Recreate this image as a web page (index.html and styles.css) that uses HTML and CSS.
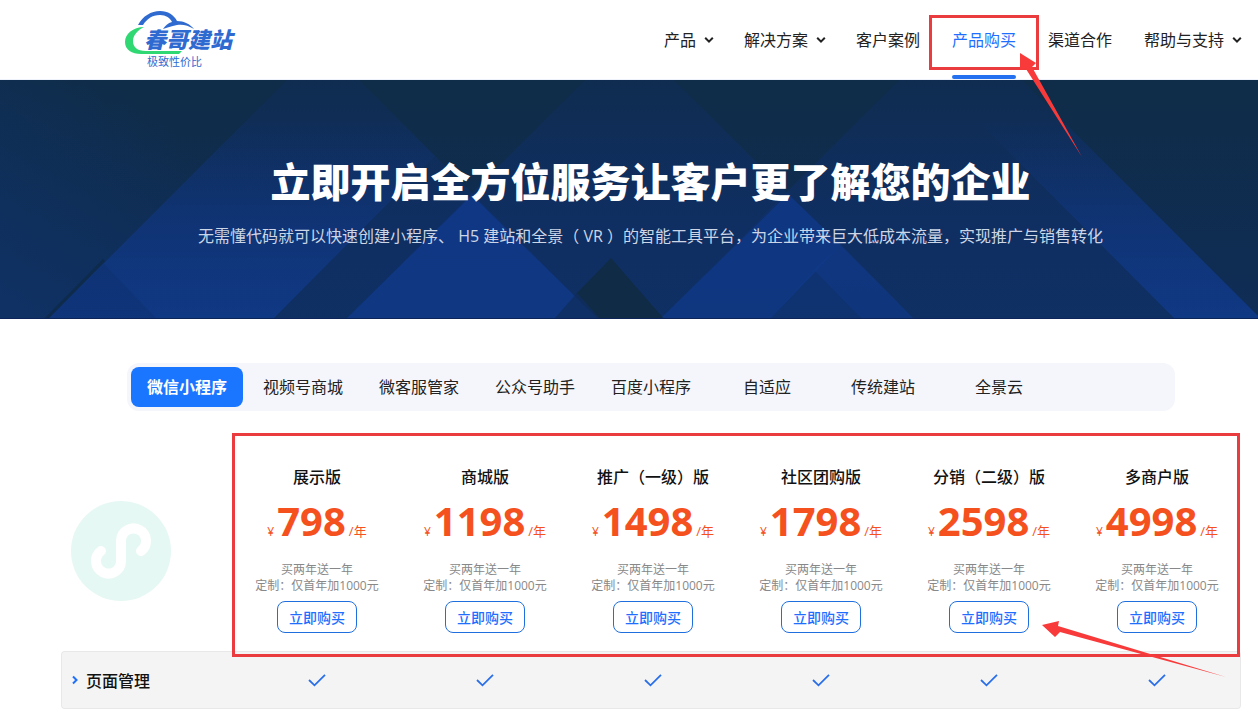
FILE: index.html
```
<!DOCTYPE html>
<html lang="zh-CN">
<head>
<meta charset="utf-8">
<meta name="viewport" content="width=device-width, initial-scale=1">
<title>春哥建站 - 产品购买</title>
<link rel="stylesheet" href="styles.css">
</head>
<body>
<svg class="defs" aria-hidden="true">
  <symbol id="caret" viewBox="0 0 10 8"><path d="M1.2 1.8 5 5.6 8.8 1.8" fill="none" stroke="currentColor" stroke-width="2"/></symbol>
  <symbol id="check" viewBox="0 0 18 14"><path d="M1 7 6.5 12.3 17 1.8" fill="none" stroke="currentColor" stroke-width="1.8"/></symbol>
</svg>

<header class="header">
  <a class="logo" href="#" aria-label="春哥建站">
    <svg class="logo-mark" viewBox="0 0 116 60" aria-hidden="true">
      <path d="M14 17C19 8 27 3 36 3c8 0 14 4 17 10 7 0 13 3 17 8-6-4-12-5-17-4-6 1-10 3-14 4 2-3 5-6 9-7-2-4-6-7-12-7-8 0-13 4-17 10z" fill="#2f6ad0"/>
      <path d="M20 19C9 19 1 26 1 34c0 8 7 12 16 12h38l3-3H22c-9 0-13-4-13-10 0-6 5-11 11-14z" fill="#2fd873"/>
    </svg>
    <span class="logo-name">春哥建站</span>
    <span class="logo-tag">极致性价比</span>
  </a>
  <nav class="nav">
    <a href="#">产品<svg class="caret"><use href="#caret"/></svg></a>
    <a href="#">解决方案<svg class="caret"><use href="#caret"/></svg></a>
    <a href="#">客户案例</a>
    <a class="current" href="#" aria-current="page">产品购买
      <span class="mark mark-nav"></span>
      <svg class="arrow arrow-nav" viewBox="0 0 64 106" aria-hidden="true"><path d="M1 1 17 11 13 15 63 105 7 17 1 18z" fill="#f93a3a"/></svg>
    </a>
    <a href="#">渠道合作</a>
    <a href="#">帮助与支持<svg class="caret"><use href="#caret"/></svg></a>
  </nav>
</header>

<section class="hero">
  <svg class="hero-art" viewBox="0 0 1258 239" preserveAspectRatio="none" aria-hidden="true">
    <defs>
      <linearGradient id="soft" gradientUnits="userSpaceOnUse" x1="0" y1="0" x2="0" y2="239"><stop offset="0" stop-color="#0f3070" stop-opacity=".2"/><stop offset=".5" stop-color="#0f3070" stop-opacity=".5"/><stop offset="1" stop-color="#0f3064" stop-opacity=".9"/></linearGradient>
      <linearGradient id="glow" gradientUnits="userSpaceOnUse" x1="0" y1="40" x2="0" y2="239"><stop offset="0" stop-color="#103a8c" stop-opacity="0"/><stop offset="1" stop-color="#103a8a" stop-opacity=".85"/></linearGradient>
      <linearGradient id="side" x1="0" y1="1" x2="1" y2="0"><stop offset="0" stop-color="#0f3266" stop-opacity=".9"/><stop offset=".7" stop-color="#0f3266" stop-opacity="0"/></linearGradient>
    </defs>
    <path d="M0 0H287L48 239H0z" fill="url(#side)"/>
    <path d="M287 0H359L598 239H48z" fill="url(#soft)"/>
    <path d="M585 0H674L914 239H346z" fill="url(#soft)"/>
    <path d="M899 0H1022L1258 236V239H660z" fill="url(#soft)"/>
    <path d="M287 0H359L435 76 273 239H48z" fill="url(#glow)"/>
    <path d="M104 184 157 239H48z" fill="#0f2f68" opacity=".35"/>
    <path d="M104 180 46 239" stroke="#0e2a48" stroke-width="3" opacity=".8"/>
    <path d="M472 115 598 239H346z" fill="#103a8a" opacity=".8"/>
    <path d="M788 114 841 165 770 239H660z" fill="#103a8a" opacity=".75"/>
    <path d="M841 165 914 239H862L814 190z" fill="#103a8a" opacity=".65"/>
    <path d="M814 190 862 239H770z" fill="#103a8a" opacity=".3"/>
    <path d="M937 0H1022L1258 236V239H1175z" fill="url(#glow)"/>
    <path d="M611 178 664 239H600L577 213z" fill="#0f2b45"/>
    <path d="M577 213 600 239H554z" fill="#0f2b55" opacity=".6"/>
    <path d="M0 238.5H1258" stroke="#0d2458"/>
  </svg>
  <h1>立即开启全方位服务让客户更了解您的企业</h1>
  <p>无需懂代码就可以快速创建小程序、 H5 建站和全景（ VR ）的智能工具平台，为企业带来巨大低成本流量，实现推广与销售转化</p>
</section>

<main class="main">
  <div class="tabs" role="tablist">
    <button class="tab active" role="tab" aria-selected="true">微信小程序</button>
    <button class="tab" role="tab">视频号商城</button>
    <button class="tab" role="tab">微客服管家</button>
    <button class="tab" role="tab">公众号助手</button>
    <button class="tab" role="tab">百度小程序</button>
    <button class="tab" role="tab">自适应</button>
    <button class="tab" role="tab">传统建站</button>
    <button class="tab" role="tab">全景云</button>
  </div>

  <div class="pricing">
    <table class="plans">
      <colgroup><col class="col-label"><col span="6"></colgroup>
      <thead>
        <tr>
          <td class="brand">
            <svg class="mini" viewBox="-50 -50 100 100" aria-hidden="true"><circle r="50" fill="#e6f8f3"/><path d="M20 0A12.500 12.500 0 1 0 0-10V10A12.500 12.500 0 1 1-20 0" fill="none" stroke="#fff" stroke-width="10" stroke-linecap="round"/></svg>
          </td>
          <th scope="col"><div class="name">展示版</div><div class="price"><span>¥</span><strong>798</strong><span class="unit">/年</span></div><div class="note">买两年送一年<br>定制：仅首年加1000元</div><button class="buy">立即购买</button></th>
          <th scope="col"><div class="name">商城版</div><div class="price"><span>¥</span><strong>1198</strong><span class="unit">/年</span></div><div class="note">买两年送一年<br>定制：仅首年加1000元</div><button class="buy">立即购买</button></th>
          <th scope="col"><div class="name">推广（一级）版</div><div class="price"><span>¥</span><strong>1498</strong><span class="unit">/年</span></div><div class="note">买两年送一年<br>定制：仅首年加1000元</div><button class="buy">立即购买</button></th>
          <th scope="col"><div class="name">社区团购版</div><div class="price"><span>¥</span><strong>1798</strong><span class="unit">/年</span></div><div class="note">买两年送一年<br>定制：仅首年加1000元</div><button class="buy">立即购买</button></th>
          <th scope="col"><div class="name">分销（二级）版</div><div class="price"><span>¥</span><strong>2598</strong><span class="unit">/年</span></div><div class="note">买两年送一年<br>定制：仅首年加1000元</div><button class="buy">立即购买</button></th>
          <th scope="col"><div class="name">多商户版</div><div class="price"><span>¥</span><strong>4998</strong><span class="unit">/年</span></div><div class="note">买两年送一年<br>定制：仅首年加1000元</div><button class="buy">立即购买</button></th>
        </tr>
      </thead>
      <tbody>
        <tr>
          <th scope="row"><button class="group" aria-expanded="false"><svg class="chevron" viewBox="0 0 6 10" aria-hidden="true"><path d="M1 1.500 4.500 5 1 8.500" fill="none" stroke="#1f6fff" stroke-width="2"/></svg>页面管理</button></th>
          <td><svg class="check"><use href="#check"/></svg></td>
          <td><svg class="check"><use href="#check"/></svg></td>
          <td><svg class="check"><use href="#check"/></svg></td>
          <td><svg class="check"><use href="#check"/></svg></td>
          <td><svg class="check"><use href="#check"/></svg></td>
          <td><svg class="check"><use href="#check"/></svg></td>
        </tr>
      </tbody>
    </table>
    <span class="mark mark-plans"></span>
    <svg class="arrow arrow-plans" viewBox="0 0 186 60" aria-hidden="true"><path d="M1 5 18 1 17 6 185 57 19 12 14 17z" fill="#f93a3a"/></svg>
  </div>
</main>
</body>
</html>
```
FILE: styles.css
```
* {
  box-sizing: border-box;
}

body {
  margin: 0;
  background: #fff;
  color: #222;
  font-family: "Open Sans", "Noto Sans CJK SC", sans-serif;
  font-size: 16px;
  line-height: 24px;
  overflow-x: hidden;
}

button {
  font-family: inherit;
  cursor: pointer;
}

.defs {
  position: absolute;
  width: 0;
  height: 0;
}

/* Header */
.header {
  display: flex;
  justify-content: space-between;
  height: 80px;
  padding: 0 18px 0 124px;
  border-bottom: 1px solid #eef2fa;
}

.logo {
  position: relative;
  width: 116px;
  padding: 26px 0 0 20px;
  color: #2f6ad0;
  text-decoration: none;
}

.logo-mark {
  position: absolute;
  top: 8px;
  left: 0;
  width: 116px;
  height: 60px;
}

.logo-name,
.logo-tag {
  position: relative;
  display: block;
  white-space: nowrap;
}

.logo-name {
  font-size: 22px;
  font-weight: 900;
  font-style: italic;
  line-height: 26px;
}

.logo-tag {
  padding-left: 3px;
  font-size: 11px;
  line-height: 20px;
}

.nav {
  display: flex;
  gap: 32px;
}

.nav a {
  position: relative;
  display: flex;
  align-items: center;
  color: #222;
  text-decoration: none;
  white-space: nowrap;
}

.nav .current {
  color: #1f6fff;
}

.nav .current::after {
  content: "";
  position: absolute;
  right: 0;
  bottom: 0;
  left: 0;
  height: 4px;
  border-radius: 2px;
  background: #2371f0;
}

.caret {
  width: 10px;
  height: 8px;
  margin: 0 -2px 0 8px;
}

/* Highlight frames and pointers */
.mark {
  position: absolute;
  border: 3px solid #ea3c3e;
  pointer-events: none;
}

.mark-nav {
  top: 15px;
  right: -23px;
  left: -23px;
  height: 55px;
}

.mark-plans {
  top: -32px;
  right: 1px;
  left: 171px;
  height: 224px;
}

.arrow {
  position: absolute;
  z-index: 2;
  pointer-events: none;
}

.arrow-nav {
  top: 52px;
  left: 67px;
  width: 64px;
  height: 106px;
}

.arrow-plans {
  top: 155px;
  right: 14px;
  width: 186px;
  height: 60px;
}

/* Hero */
.hero {
  position: relative;
  padding: 76px 0 71px 43px;
  background: linear-gradient(#0f2c48, #0f2d56);
  color: #fff;
  text-align: center;
}

.hero-art {
  position: absolute;
  inset: 0;
  width: 100%;
  height: 100%;
}

.hero h1,
.hero p {
  position: relative;
  margin: 0;
}

.hero h1 {
  font-size: 40px;
  font-weight: 900;
  line-height: 52px;
}

.hero p {
  margin-top: 16px;
  color: #ccd6e6;
}

/* Tabs */
.main {
  padding: 44px 17px 19px 61px;
}

.tabs {
  display: flex;
  gap: 4px;
  margin: 0 66px;
  padding: 4px;
  border-radius: 12px;
  background: #f5f6fb;
}

.tab {
  width: 112px;
  height: 40px;
  padding: 0 0 2px;
  border: 0;
  border-radius: 8px;
  background: none;
  color: #222;
  font-size: 16px;
}

.tab.active {
  background: #1a75ff;
  color: #fff;
  font-weight: 700;
}

/* Plans */
.pricing {
  position: relative;
  margin-top: 54px;
}

.plans {
  width: 100%;
  table-layout: fixed;
  border-spacing: 0;
}

.plans th,
.plans td {
  padding: 0;
  text-align: center;
}

.col-label {
  width: 172px;
}

.plans thead th {
  padding-bottom: 18px;
}

.plans .brand {
  padding: 36px 0 0 10px;
  text-align: left;
  vertical-align: top;
}

.mini {
  display: block;
  width: 100px;
  height: 100px;
}

.name {
  color: #111;
  font-weight: 500;
}

.price {
  display: flex;
  justify-content: center;
  align-items: baseline;
  gap: 3px;
  height: 48px;
  margin-top: 8px;
  color: #f4511e;
  font-size: 12px;
  font-weight: 400;
  line-height: 48px;
}

.price strong {
  font-size: 40px;
  font-weight: 700;
}

.price .unit {
  font-size: 13px;
}

.note {
  margin-top: 17px;
  color: #888;
  font-size: 12px;
  font-weight: 400;
  line-height: 16px;
}

.buy {
  display: block;
  width: 80px;
  height: 32px;
  margin: 7px auto 0;
  padding: 0 0 1px;
  border: 1px solid #1f6fdf;
  border-radius: 8px;
  background: #fff;
  color: #1f6fff;
  font-size: 14px;
  font-weight: 500;
}

.plans tbody th,
.plans tbody td {
  height: 58px;
  border: 1px solid #e8e8e8;
  border-width: 1px 0;
  background: #f4f4f4;
}

.plans tbody th {
  padding-left: 10px;
  border-left-width: 1px;
  border-radius: 4px 0 0 4px;
}

.plans tbody td:last-child {
  border-right-width: 1px;
  border-radius: 0 4px 4px 0;
}

.group {
  display: flex;
  align-items: center;
  gap: 8px;
  padding: 0;
  border: 0;
  background: none;
  color: #111;
  font-size: 16px;
  font-weight: 500;
}

.chevron {
  width: 6px;
  height: 10px;
}

.check {
  display: block;
  width: 18px;
  height: 14px;
  margin: 0 auto;
  color: #2a6fe8;
}
```
